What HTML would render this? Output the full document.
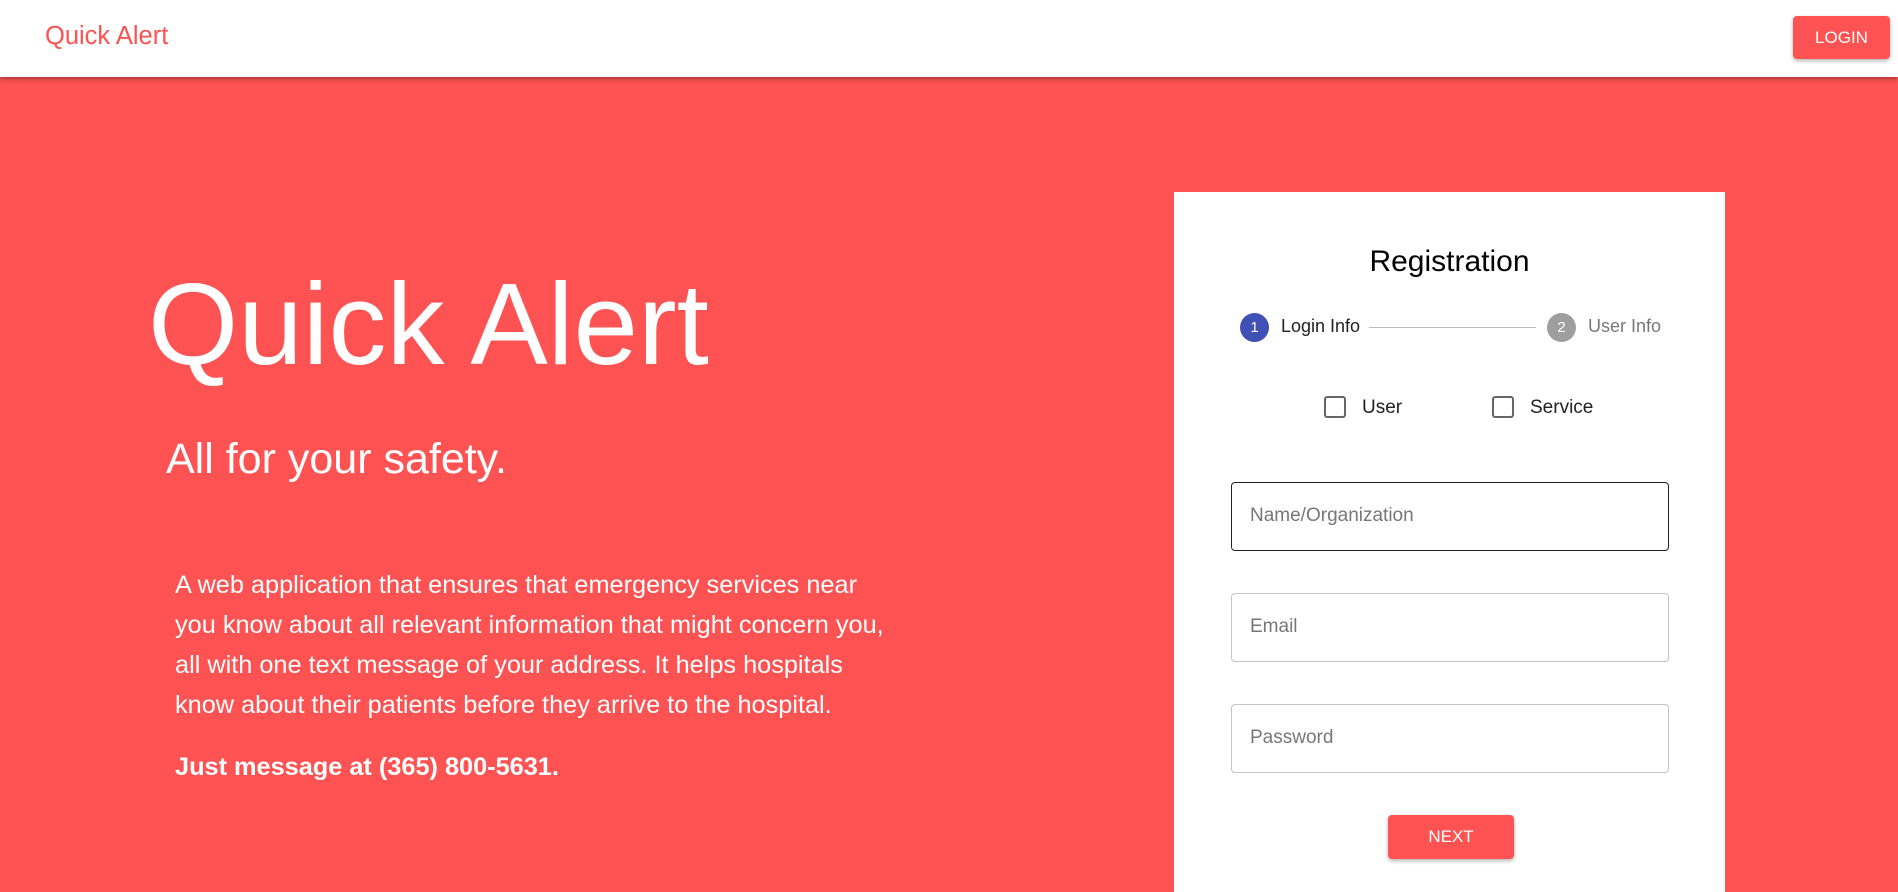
<!DOCTYPE html>
<html><head><meta charset="utf-8"><style>
*{box-sizing:border-box;margin:0;padding:0}
body{width:1898px;height:880px;overflow:hidden;background:#ff5252;font-family:"Liberation Sans",sans-serif;position:relative}
.hdr{position:absolute;left:0;top:0;width:1898px;height:77px;background:#fff;box-shadow:0 2px 5px rgba(0,0,0,.35);z-index:2}
.logo{position:absolute;left:45px;top:22px;font-size:25.5px;color:#ff5252}
.login{position:absolute;left:1793px;top:16px;width:97px;height:43px;background:#ff5252;color:#fff;border-radius:4px;font-size:17px;display:flex;align-items:center;justify-content:center;box-shadow:0 2px 4px rgba(0,0,0,.3)}
.h1{position:absolute;left:148px;top:266px;font-size:116px;color:#fff;line-height:1}
.h2{position:absolute;left:166px;top:435px;font-size:43px;color:#fff}
.p{position:absolute;left:175px;top:565px;width:725px;font-size:25.3px;line-height:40px;color:#fff}
.b{position:absolute;left:175px;top:753px;font-size:25.3px;font-weight:bold;color:#fff}
.card{position:absolute;left:1174px;top:192px;width:551px;height:700px;background:#fff}
.t{position:absolute;width:551px;text-align:center;font-size:30px;color:#000}
.c{position:absolute;width:29px;height:29px;border-radius:50%;color:#fff;font-size:15px;display:flex;align-items:center;justify-content:center}
.sl{position:absolute;font-size:18px}
.cb{position:absolute;width:22px;height:22px;border:2.5px solid #666;border-radius:3px}
.cl{position:absolute;font-size:19px;color:#222}
.in{position:absolute;left:1231px;width:438px;height:69px;border:1px solid #c4c4c4;border-radius:4px;font-size:19px;color:#777;padding:22px 0 0 18px}
.next{position:absolute;left:1388px;top:815px;width:126px;height:44px;background:#ff5252;color:#fff;border-radius:4px;font-size:17px;display:flex;align-items:center;justify-content:center;box-shadow:0 2px 4px rgba(0,0,0,.3)}
</style></head><body>
<div class="hdr"><div class="logo">Quick Alert</div><div class="login">LOGIN</div></div>
<div class="h1">Quick Alert</div>
<div class="h2">All for your safety.</div>
<div class="p">A web application that ensures that emergency services near you know about all relevant information that might concern you, all with one text message of your address. It helps hospitals know about their patients before they arrive to the hospital.</div>
<div class="b">Just message at (365) 800-5631.</div>
<div class="card"></div>
<div class="t" style="left:1174px;top:245px">Registration</div>
<div class="c" style="left:1240px;top:313px;background:#3f51b5">1</div>
<div class="sl" style="left:1281px;top:316px;color:#222">Login Info</div>
<div style="position:absolute;left:1369px;top:327px;width:167px;height:1px;background:#bdbdbd"></div>
<div class="c" style="left:1547px;top:313px;background:#9e9e9e">2</div>
<div class="sl" style="left:1588px;top:316px;color:#777">User Info</div>
<div class="cb" style="left:1324px;top:396px"></div><div class="cl" style="left:1362px;top:397px">User</div>
<div class="cb" style="left:1492px;top:396px"></div><div class="cl" style="left:1530px;top:397px">Service</div>
<div class="in" style="top:482px;border-color:#222">Name/Organization</div>
<div class="in" style="top:593px">Email</div>
<div class="in" style="top:704px">Password</div>
<div class="next">NEXT</div>
</body></html>
